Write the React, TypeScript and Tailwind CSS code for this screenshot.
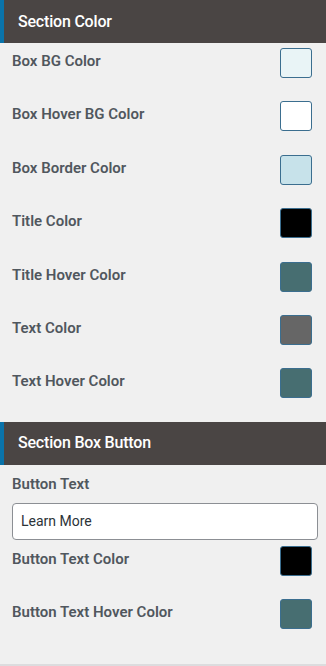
import React from "react";

const font = { fontFamily: "Roboto, 'Noto Sans', sans-serif" };

function Header({ title }: { title: string }) {
  return (
    <div className="flex h-[43px] bg-[#4a4544]">
      <div className="w-[4px] bg-[#0a73aa]" />
      <div className="flex items-center pl-[14px] text-[16px] font-medium text-white tracking-[-0.2px]">
        {title}
      </div>
    </div>
  );
}

function ColorRow({ label, color }: { label: string; color: string }) {
  return (
    <div className="flex h-[53.4px] items-start justify-between pl-[12px] pr-[14px]">
      <div className="mt-[3px] text-[15px] font-semibold leading-[20px] text-[#50575e]">{label}</div>
      <div
        className="h-[30px] w-[32px] rounded-[3px] border border-[#3b6e8f]"
        style={{ backgroundColor: color }}
      />
    </div>
  );
}

export default function App() {
  const rows1: [string, string][] = [
    ["Box BG Color", "#e9f4f6"],
    ["Box Hover BG Color", "#ffffff"],
    ["Box Border Color", "#c7e2ea"],
    ["Title Color", "#000000"],
    ["Title Hover Color", "#476e71"],
    ["Text Color", "#666666"],
    ["Text Hover Color", "#476e71"],
  ];
  return (
    <div className="h-[666px] w-[326px] overflow-hidden bg-[#f0f0f0]" style={font}>
      <Header title="Section Color" />
      <div className="pt-[5px]">
        {rows1.map(([l, c]) => (
          <ColorRow key={l} label={l} color={c} />
        ))}
      </div>
      <Header title="Section Box Button" />
      <div className="border-b-2 border-[#dcdcde] pb-[11px]">
        <div className="pl-[12px] pt-[9px] text-[15px] font-semibold leading-[20px] text-[#50575e]">
          Button Text
        </div>
        <div className="ml-[12px] mr-[8px] mt-[9px] mb-[6px] flex h-[37px] items-center rounded-[4px] border border-[#8c8f94] bg-white pl-[8px] text-[14px] text-[#2c3338]">
          Learn More
        </div>
        <ColorRow label="Button Text Color" color="#000000" />
        <ColorRow label="Button Text Hover Color" color="#476e71" />
      </div>
    </div>
  );
}
